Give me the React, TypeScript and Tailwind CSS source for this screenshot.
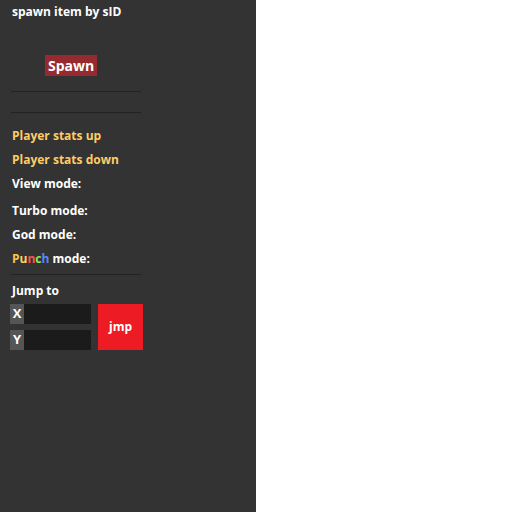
export default function App() {
  return (
    <div className="flex h-[512px] w-[512px] bg-white font-['Open_Sans',sans-serif] text-[12px] font-bold text-white">
      <div className="w-[256px] bg-[#333333] px-[11px] pt-[4px]">
        <div className="pl-px leading-[16px]">spawn item by sID</div>
        <div className="flex pt-[35px] pb-[15px] pl-[34px]">
          <button className="bg-[#962a2f] px-[3px] text-[14px] leading-[21px] text-white">Spawn</button>
        </div>
        <div className="w-[130px] border-t border-[#222]" />
        <div className="mt-[20px] w-[130px] border-t border-[#222]" />
        <div className="flex flex-col pt-[15px] pl-px leading-[16px]">
          <div className="text-[#ffcc66]">Player stats up</div>
          <div className="mt-[8px] text-[#ffcc66]">Player stats down</div>
          <div className="mt-[8px]">View mode:</div>
          <div className="mt-[11px]">Turbo mode:</div>
          <div className="mt-[8px]">God mode:</div>
          <div className="mt-[8px]">
            <span className="text-[#f8c548]">P</span>
            <span className="text-[#ffd060]">u</span>
            <span className="text-[#ff5050]">n</span>
            <span className="text-[#88ee44]">c</span>
            <span className="text-[#5588ff]">h</span> mode:
          </div>
        </div>
        <div className="mt-[7px] w-[130px] border-t border-[#222]" />
        <div className="mt-[8px] pl-px leading-[16px]">Jump to</div>
        <div className="mt-[5px] flex gap-[7px]">
          <div className="-ml-px flex w-[81px] flex-col gap-[6px]">
            <div className="flex h-[20px]">
              <span className="flex w-[14px] items-center justify-center bg-[#555] text-[13px]">X</span>
              <input className="min-w-0 flex-1 bg-[#1b1b1b] outline-none" />
            </div>
            <div className="flex h-[20px]">
              <span className="flex w-[14px] items-center justify-center bg-[#555] text-[13px]">Y</span>
              <input className="min-w-0 flex-1 bg-[#1b1b1b] outline-none" />
            </div>
          </div>
          <button className="h-[46px] w-[45px] bg-[#ed1c24] text-white">jmp</button>
        </div>
      </div>
    </div>
  )
}
